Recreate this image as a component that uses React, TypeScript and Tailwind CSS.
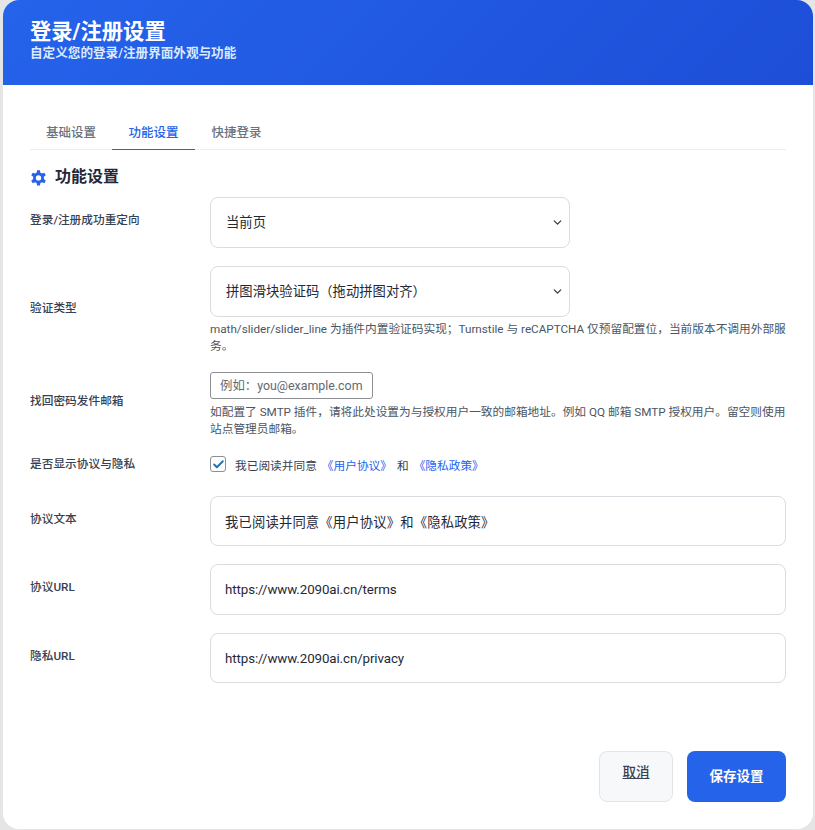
import { ChevronDown, Check } from "lucide-react";
import type { ReactNode } from "react";

const FONT = "font-['Roboto','Noto_Sans_CJK_SC',sans-serif]";

function Row({ label, labelPad = "pb-[3px]", children }: { label: string; labelPad?: string; children: ReactNode }) {
  return (
    <div className="flex items-center">
      <label className={`w-[180px] shrink-0 text-[11.7px] font-medium text-[#374151] ${labelPad}`}>{label}</label>
      <div className="min-w-0 flex-1">{children}</div>
    </div>
  );
}

function SelectBox({ value }: { value: string }) {
  return (
    <div className="relative w-[360px]">
      <select
        defaultValue={value}
        className="h-[51px] w-full appearance-none rounded-lg border border-[#d9dce1] bg-white pl-[15px] pr-8 pt-[1px] text-[13.33px] text-[#1f2937]"
      >
        <option>{value}</option>
      </select>
      <ChevronDown className="pointer-events-none absolute right-[6px] top-[19px] h-[13px] w-[13px] text-[#374151]" strokeWidth={2.5} />
    </div>
  );
}

function TextBox({ value, tracking = "tracking-[-0.1px]" }: { value: string; tracking?: string }) {
  return (
    <input
      defaultValue={value}
      className={`block h-[50.5px] w-full rounded-lg border border-[#d9dce1] bg-white px-[14px] pt-[1px] text-[13.33px] text-[#1f2937] outline-none ${tracking}`}
    />
  );
}

export default function App() {
  return (
    <div className={`${FONT} h-[830px] bg-[#e5e5e5] pl-[3px] pr-[2px]`}>
      <div className="h-[829px] overflow-hidden rounded-2xl bg-white">
        {/* Header */}
        <div className="h-[85px] bg-linear-[135deg] from-[#2563eb] to-[#1d4ed8] pl-[27px] pt-[17px] text-white">
          <h1 className="text-[21.3px] leading-[29px] font-bold">登录/注册设置</h1>
          <p className="text-[12.6px] leading-[14px] font-semibold text-[#dbeafe]">自定义您的登录/注册界面外观与功能</p>
        </div>

        <div className="px-[27px]">
          {/* Tabs */}
          <div className="mt-[36px] flex h-[29px] border-b border-[#eceef1] text-[12.5px] font-medium">
            <button className="w-[82px] pb-[4px] text-[#6b7280]">基础设置</button>
            <button className="-mb-px w-[83px] border-b border-[#2563eb] pb-[4px] text-[#2563eb]">功能设置</button>
            <button className="w-[83px] pb-[4px] text-[#6b7280]">快捷登录</button>
          </div>

          {/* Section title */}
          <div className="mt-[15px] flex h-[24px] items-center gap-[8px]">
            <svg viewBox="2.5 1 19 21" className="h-[17px] w-[17px] fill-[#2563eb]">
              <path
                fillRule="evenodd"
                d="M13.8 1h-3.6l-.5 3.1c-.7.2-1.3.6-1.9 1L4.9 4 3 7.1l2.4 2c-.1.9-.1 1.8 0 2.7L3 13.9 4.9 17l2.9-1.1c.6.4 1.2.8 1.9 1l.5 3.1h3.6l.5-3.1c.7-.2 1.3-.6 1.9-1l2.9 1.1 1.9-3.1-2.4-2c.1-.9.1-1.8 0-2.7l2.4-2L19.1 4l-2.9 1.1c-.6-.4-1.2-.8-1.9-1L13.8 1zM12 7.2a3.3 3.3 0 1 1 0 6.6 3.3 3.3 0 0 1 0-6.6z"
                transform="translate(0 1.5)"
              />
            </svg>
            <h2 className="text-base font-bold text-[#1f2937]">功能设置</h2>
          </div>

          {/* Form rows */}
          <div className="mt-[8px] flex flex-col gap-[18px]">
            <Row label="登录/注册成功重定向">
              <SelectBox value="当前页" />
            </Row>
            <Row label="验证类型">
              <SelectBox value="拼图滑块验证码（拖动拼图对齐）" />
              <p className="mt-[4px] text-[11.7px] leading-[17px] text-[#4b5563]">
                math/slider/slider_line 为插件内置验证码实现；Turnstile 与 reCAPTCHA 仅预留配置位，当前版本不调用外部服务。
              </p>
            </Row>
            <div className="-mt-px">
              <Row label="找回密码发件邮箱" labelPad="pb-[7px]">
                <input
                  placeholder="例如：you@example.com"
                  className="block h-[27px] w-[163px] rounded-[3px] border border-[#8c8f94] bg-white px-[9px] text-[12.4px] outline-none placeholder:text-[#646970]"
                />
                <p className="mt-[5px] text-[11.7px] leading-[17px] text-[#4b5563]">
                  如配置了 SMTP 插件，请将此处设置为与授权用户一致的邮箱地址。例如 QQ 邮箱 SMTP 授权用户。留空则使用站点管理员邮箱。
                </p>
              </Row>
            </div>
            <div className="mb-px">
              <Row label="是否显示协议与隐私">
                <div className="flex h-[20px] items-center text-[11.7px] text-[#374151]">
                  <span className="-mt-[4px] flex h-[16px] w-[16px] items-center justify-center rounded-[3px] border border-[#8c8f94] bg-white">
                    <Check className="h-[13px] w-[13px] text-[#2271b1]" strokeWidth={3.5} />
                  </span>
                  <div className="flex pt-[2px]">
                    <span className="ml-[9px]">我已阅读并同意</span>
                    <a className="ml-[5px] text-[#2563eb]">《用户协议》</a>
                    <span className="ml-[5px]">和</span>
                    <a className="ml-[5px] text-[#2563eb]">《隐私政策》</a>
                  </div>
                </div>
              </Row>
            </div>
            <Row label="协议文本">
              <TextBox value="我已阅读并同意《用户协议》和《隐私政策》" tracking="tracking-[0.15px]" />
            </Row>
            <Row label="协议URL">
              <TextBox value="https://www.2090ai.cn/terms" />
            </Row>
            <Row label="隐私URL">
              <TextBox value="https://www.2090ai.cn/privacy" />
            </Row>
          </div>

          {/* Footer actions */}
          <div className="mt-[67.5px] flex justify-end gap-[14px]">
            <a className="h-[51px] w-[74px] rounded-lg border border-[#e2e4e8] bg-[#f7f8fa] pt-[10px] text-center text-[13.5px] font-medium text-[#374151] underline">
              取消
            </a>
            <button className="h-[51px] w-[99px] rounded-lg bg-[#2563eb] text-[13.5px] font-bold text-white">保存设置</button>
          </div>
        </div>
      </div>
    </div>
  );
}
